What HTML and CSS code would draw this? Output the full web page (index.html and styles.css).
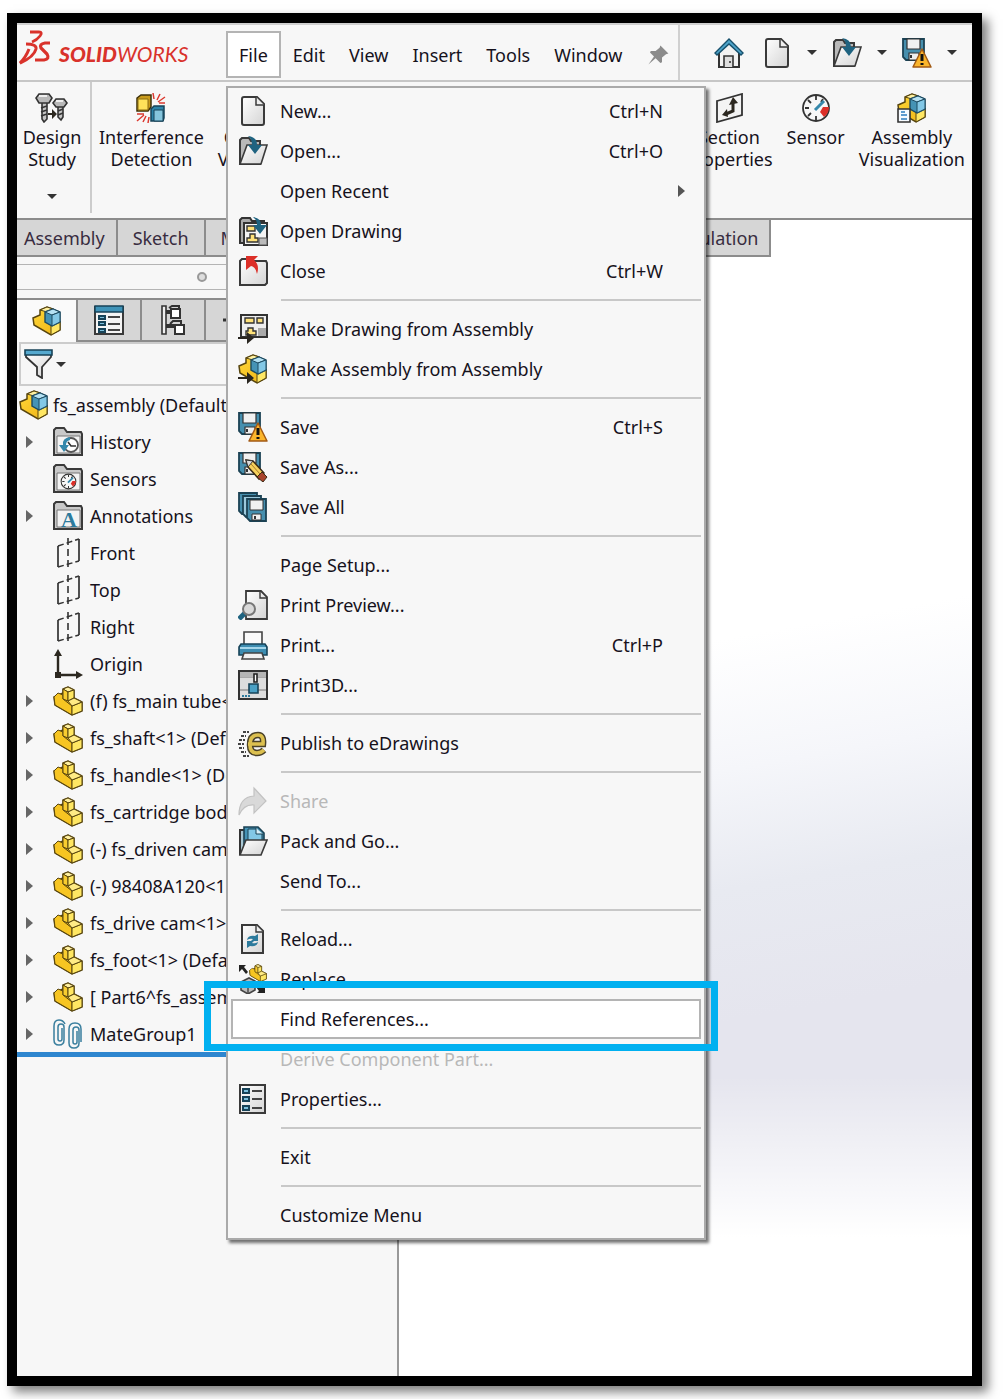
FILE: index.html
```html
<!DOCTYPE html>
<html lang="en">
<head>
    <meta charset="utf-8">
    <title>SOLIDWORKS - fs_assembly</title>
    <link rel="stylesheet" href="styles.css">
</head>
<body>
    <!-- icon sprite -->
    <svg class="sprite" aria-hidden="true">
        <defs>
            <linearGradient id="paper" x1="0" y1="0" x2="1" y2="1">
                <stop offset="0" stop-color="#fff"/>
                <stop offset="1" stop-color="#d4d4d4"/>
            </linearGradient>
            <linearGradient id="gold" x1="0" y1="0" x2="1" y2="1">
                <stop offset="0" stop-color="#ffd83a"/>
                <stop offset="1" stop-color="#f0b414"/>
            </linearGradient>
        </defs>
        <symbol id="i-new" viewBox="0 0 30 30">
            <path d="M6 1h13l7 7v19q0 2-2 2H6q-2 0-2-2V3q0-2 2-2z" fill="url(#paper)" stroke="#3a3a3a" stroke-width="2"/>
            <path d="M18 1v8h8" fill="#eee" stroke="#3a3a3a" stroke-width="1.5"/>
        </symbol>
        <symbol id="i-open" viewBox="0 0 30 30">
            <path d="M2 28V4l2-2h7l2 3h9v23z" fill="#b9b9b9" stroke="#3a3a3a" stroke-width="2"/>
            <path d="M2 28L9 9h20l-6 19z" fill="url(#paper)" stroke="#3a3a3a" stroke-width="1.6"/>
            <path d="M10 0q9 1 9 9h5l-7 9-7-9h4q0-6-4-9z" fill="#1f6380"/>
        </symbol>
        <symbol id="i-opendraw" viewBox="0 0 30 30">
            <path d="M2 27V4l2-2h8l2 3h12v22z" fill="#aaa" stroke="#333" stroke-width="2"/>
            <path d="M6 7h23v22H6z" fill="#f4f4f4" stroke="#333" stroke-width="2"/>
            <path d="M9 10h8v5H9zM12 18h5v4h3v4H9v-4h3z" fill="#ffe27a" stroke="#333" stroke-width="1.4"/>
            <path d="M21 22h8v7h-8z" fill="#bbb" stroke="#555"/>
            <path d="M15 1q8 1 8 8h6l-7 9-7-9h4q0-5-4-8z" fill="#1f6380"/>
        </symbol>
        <symbol id="i-close" viewBox="0 0 30 30">
            <path d="M2 29V5l2-2h7l2 2h15l1 2v20l-2 2z" fill="url(#paper)" stroke="#3a3a3a" stroke-width="2"/>
            <path d="M8 0h12l-4 4q6 5 3 14-1-7-6-8l-5 4z" fill="#dc2f28"/>
        </symbol>
        <symbol id="i-part" viewBox="0 0 30 30">
            <path d="M1 11l9-4V3l5-2 6 3v8l8 4v9l-10 4L2 19z" fill="url(#gold)" stroke="#57450f" stroke-width="1.5"/>
            <path d="M1 11l4-4 5 2v4l9 7v9L2 19z" fill="#f7c522" stroke="#57450f"/>
            <path d="M10 3l5 3 6-2-6-3z" fill="#fff0a0" stroke="#57450f"/>
            <path d="M10 3l5 3v9l-5-2z" fill="#f9cd30" stroke="#57450f"/>
            <path d="M15 6l6-2v8l-6 3zM19 20l10-4v9l-10 4z" fill="#ffe763" stroke="#57450f"/>
            <path d="M15 15l6-3 8 4-10 4z" fill="#ffeb85" stroke="#57450f"/>
        </symbol>
        <symbol id="i-asm" viewBox="0 0 30 30">
            <path d="M1 12l7-3V4l7-3 6 2v10l7 3v8l-9 5L2 19z" fill="url(#gold)" stroke="#57450f" stroke-width="1.5"/>
            <path d="M8 4l7 2 6-3-6-2z" fill="#fff0a0" stroke="#57450f"/>
            <path d="M19 18l9-3v9l-9 5z" fill="#ffe763" stroke="#57450f"/>
            <path d="M13 6l8-3 7 3v10l-8 4-7-4z" fill="#4593b5" stroke="#1d4a60" stroke-width="1.4"/>
            <path d="M13 6l7 3 8-3-7-3z" fill="#b5e2f4" stroke="#1d4a60"/>
            <path d="M20 9l8-3v10l-8 4z" fill="#83c8e6" stroke="#1d4a60"/>
        </symbol>
        <symbol id="i-makedraw" viewBox="0 0 30 30">
            <path d="M3 1h26v22H3z" fill="#eee" stroke="#333" stroke-width="2"/>
            <path d="M7 4h9v5H7zM19 4h6v5h-6zM10 14h5v3h3v4H8v-4h2z" fill="#ffe27a" stroke="#333" stroke-width="1.4"/>
            <path d="M20 14h8v8h-8z" fill="#aaa"/>
            <path d="M0 23h9v-5l7 6-7 6v-5H0z" fill="#2a2620"/>
        </symbol>
        <symbol id="i-makeasm" viewBox="0 0 30 30">
            <use href="#i-asm"/>
            <path d="M0 23h9v-5l7 6-7 6v-5H0z" fill="#2a2620"/>
        </symbol>
        <symbol id="i-floppy" viewBox="0 0 30 30">
            <path d="M1 1h21v21H4l-3-3z" fill="#468fae" stroke="#1b4254" stroke-width="1.8"/>
            <path d="M5 1h13v10H5z" fill="#f1f1f1" stroke="#333" stroke-width="1.2"/>
            <path d="M7 15h10v7H7z" fill="#eee" stroke="#333" stroke-width="1.2"/>
            <path d="M8 17h2v3H8z" fill="#333"/>
        </symbol>
        <symbol id="i-save" viewBox="0 0 30 30">
            <use href="#i-floppy"/>
            <path d="M20 11l9 18H11z" fill="#fbb52b" stroke="#a35a14" stroke-width="1.5" stroke-linejoin="round"/>
            <path d="M20 16v7M20 25v2" stroke="#111" stroke-width="3"/>
        </symbol>
        <symbol id="i-saveas" viewBox="0 0 30 30">
            <use href="#i-floppy"/>
            <path d="M8 8l7 1 11 12-5 6L10 15z" fill="#f6d15c" stroke="#3c2b14" stroke-width="1.5"/>
            <path d="M8 8l7 1-5 6z" fill="#ddd" stroke="#333"/>
            <path d="M24 20l5 5-4 5-6-5z" fill="#a8442c" stroke="#3c2b14"/>
            <path d="M13 12l9 10" stroke="#a87b28"/>
        </symbol>
        <symbol id="i-saveall" viewBox="0 0 30 30">
            <path d="M1 1h18v21H4l-3-3z" fill="#468fae" stroke="#1b4254" stroke-width="1.8"/>
            <path d="M5 4h18v21H8l-3-3z" fill="#9cc9dc" stroke="#1b4254" stroke-width="1.8"/>
            <path d="M9 7h19v22H12l-3-3z" fill="#468fae" stroke="#1b4254" stroke-width="1.8"/>
            <path d="M12 8h13v10H12zM14 22h9v6h-9z" fill="#f1f1f1" stroke="#333"/>
            <path d="M16 24h2v3h-2z" fill="#333"/>
        </symbol>
        <symbol id="i-preview" viewBox="0 0 30 30">
            <path d="M8 1h15l6 6v22H8z" fill="url(#paper)" stroke="#3a3a3a" stroke-width="1.8"/>
            <path d="M22 1v7h7" fill="none" stroke="#3a3a3a" stroke-width="1.4"/>
            <path d="M1 29l6-6" stroke="#1f6380" stroke-width="5"/>
            <circle cx="11" cy="19" r="6" fill="#d9d9d9" stroke="#777" stroke-width="2"/>
        </symbol>
        <symbol id="i-print" viewBox="0 0 30 30">
            <path d="M6 16V2h18v14z" fill="#fafafa" stroke="#444" stroke-width="1.6"/>
            <path d="M3 14h24l2 3v8H1v-8z" fill="#3d8db1" stroke="#174358" stroke-width="1.6"/>
            <path d="M2 18h26" stroke="#a5d6ea" stroke-width="2"/>
            <path d="M6 23h18l2 6H4z" fill="#f2f2f2" stroke="#444" stroke-width="1.6"/>
        </symbol>
        <symbol id="i-print3d" viewBox="0 0 30 30">
            <path d="M1 1h28v28H1z" fill="#ddd" stroke="#333" stroke-width="2"/>
            <path d="M2 7h26M2 20h26" stroke="#777"/>
            <path d="M2 2h26v5H2z" fill="#b5b5b5"/>
            <path d="M16 4h3v8h-3z" fill="#fff" stroke="#222" stroke-width="1.6"/>
            <path d="M11 14h9v9h-9z" fill="#4aa0c4" stroke="#174358" stroke-width="1.6"/>
            <path d="M4 26h2m1 0h2m1 0h2" stroke="#2c7a9c" stroke-width="2"/>
        </symbol>
        <symbol id="i-edraw" viewBox="0 0 30 30">
            <path d="M10 16h15q1-9-5-9-8 0-8 10 0 8 7 8 4 0 7-3" fill="none" stroke="#4a4128" stroke-width="6.5"/>
            <path d="M10 16h15q1-9-5-9-8 0-8 10 0 8 7 8 4 0 7-3" fill="none" stroke="#dcc04f" stroke-width="3.6"/>
            <path d="M5 4h6M3 8h5M1 12h6M0 16h6M1 20h5M3 24h5M5 28h6" stroke="#444" stroke-width="2" stroke-dasharray="3 1"/>
        </symbol>
        <symbol id="i-share" viewBox="0 0 30 30">
            <path d="M1 29q0-18 15-19V2l12 13-12 12v-8Q6 18 1 29z" fill="#d9d9d9" stroke="#c2c2c2" stroke-width="1.2"/>
        </symbol>
        <symbol id="i-pack" viewBox="0 0 30 30">
            <path d="M2 28V4h6v24z" fill="#a9c7d3" stroke="#333" stroke-width="2"/>
            <path d="M6 22V1h14l6 6v8H10z" fill="#4593b5" stroke="#1b4254" stroke-width="1.6"/>
            <path d="M10 18V3h8l6 5v8z" fill="#83c8e6" stroke="#1b4254"/>
            <path d="M18 2v6h7" fill="#d8f0fa" stroke="#1b4254"/>
            <path d="M2 29l6-15h21l-6 15z" fill="url(#paper)" stroke="#3a3a3a" stroke-width="1.6"/>
        </symbol>
        <symbol id="i-reload" viewBox="0 0 30 30">
            <path d="M4 1h15l6 6v22H4z" fill="url(#paper)" stroke="#3a3a3a" stroke-width="2"/>
            <path d="M18 1v7h7" fill="#eee" stroke="#3a3a3a" stroke-width="1.4"/>
            <path d="M9 16q1-5 8-4l3-2v7h-7l2-2q-3-1-6 1zM20 18q-1 5-8 4l-3 2v-7h7l-2 2q3 1 6-1z" fill="#2c7a9c"/>
        </symbol>
        <symbol id="i-replace" viewBox="0 0 30 30">
            <use href="#i-part" x="11" y="0" width="18" height="18"/>
            <path d="M1 1h7L6 3l4 5-2 2-4-5-3 3z" fill="#222"/>
            <path d="M3 18l8-4 6 3v9l-7 4-7-4z" fill="#bbb" stroke="#444" stroke-width="1.6"/>
            <path d="M3 18l7 3v9m0-9l7-4" fill="none" stroke="#444" stroke-width="1.4"/>
            <path d="M27 29h-8l2-2-3-4 3-2 3 3 3-3z" fill="#222"/>
        </symbol>
        <symbol id="i-props" viewBox="0 0 30 30">
            <path d="M2 1h25v28H2z" fill="url(#paper)" stroke="#3a3a3a" stroke-width="2"/>
            <path d="M5 5h6v4H5zM5 13h6v4H5zM5 22h6v4H5z" fill="#7cc0dd" stroke="#174358" stroke-width="2"/>
            <path d="M14 7h10M14 15h10M14 24h10" stroke="#444" stroke-width="2"/>
        </symbol>
        <symbol id="i-proptab" viewBox="0 0 30 30">
            <path d="M1 2h28v27H1z" fill="#f4f4f4" stroke="#3a3a3a" stroke-width="2"/>
            <path d="M1 1h28v6H1z" fill="#3f93b8" stroke="#174358" stroke-width="1.4"/>
            <path d="M5 11h6v3H5zM5 17h6v3H5zM5 24h6v3H5z" fill="#7cc0dd" stroke="#174358" stroke-width="2"/>
            <path d="M14 12h12M14 19h12M14 25h12" stroke="#444" stroke-width="2"/>
        </symbol>
        <symbol id="i-config" viewBox="0 0 30 30">
            <path d="M4 1h4v28H4z" fill="#eee" stroke="#333" stroke-width="1.6"/>
            <path d="M8 7h6M8 21h8" stroke="#333" stroke-width="4"/>
            <path d="M11 3l3-2h7v4M12 19l3-3h8v3" fill="none" stroke="#333" stroke-width="2"/>
            <path d="M13 4h9v9h-9zM17 20h9v9h-9z" fill="#fff" stroke="#333" stroke-width="2"/>
        </symbol>
        <symbol id="i-target" viewBox="0 0 30 30">
            <circle cx="15" cy="15" r="9" fill="none" stroke="#333" stroke-width="2"/>
            <path d="M1 15h28M15 1v28" stroke="#333" stroke-width="3"/>
        </symbol>
        <symbol id="i-filter" viewBox="0 0 30 30">
            <path d="M2 5h25v3l-9 10v11l-5-3v-8L2 8z" fill="url(#paper)" stroke="#333" stroke-width="1.8"/>
            <path d="M1 1h27v5H1z" fill="#55a9cf" stroke="#174358" stroke-width="1.6"/>
        </symbol>
        <symbol id="i-folder" viewBox="0 0 30 30">
            <path d="M1 28V3l2-2h8l3 4h14l1 2v21z" fill="#c9c9c9" stroke="#3a3a3a" stroke-width="2"/>
            <path d="M4 9h23v17H4z" fill="#f3f3f3" stroke="#777"/>
        </symbol>
        <symbol id="i-history" viewBox="0 0 30 30">
            <use href="#i-folder"/>
            <circle cx="18" cy="18" r="7" fill="#fff" stroke="#555" stroke-width="1.8"/>
            <path d="M15 15l3 4h5" fill="none" stroke="#333" stroke-width="1.6"/>
            <path d="M17 10q-8 1-7 8H6l5 7 5-7h-3q0-4 4-5z" fill="#3588ab"/>
        </symbol>
        <symbol id="i-gauge" viewBox="0 0 30 30">
            <circle cx="15" cy="15" r="13" fill="#f7f7f7" stroke="#333" stroke-width="1.8"/>
            <path d="M15 3v4M4 15h4M7 7l3 3M7 23l3-3M15 27v-4M22 6l-2 3" stroke="#333" stroke-width="1.8"/>
            <path d="M19 19l3-5h6q0 6-5 10z" fill="#dc2f28"/>
            <path d="M14 17l9-9" stroke="#3588ab" stroke-width="3"/>
        </symbol>
        <symbol id="i-sensors" viewBox="0 0 30 30">
            <use href="#i-folder"/>
            <use href="#i-gauge" x="7" y="9" width="17" height="17"/>
        </symbol>
        <symbol id="i-plane" viewBox="0 0 30 30">
            <path d="M5 8v21M26 1v22" stroke="#333" stroke-width="1.7"/>
            <path d="M5 8l21-7M5 29l21-6" stroke="#333" stroke-width="1.5" stroke-dasharray="6 3"/>
            <path d="M15 0v30" stroke="#333" stroke-width="1.6" stroke-dasharray="7 4"/>
        </symbol>
        <symbol id="i-origin" viewBox="0 0 30 30">
            <path d="M5 27V6M5 26h20" stroke="#2c2820" stroke-width="2.4"/>
            <path d="M5 0l4 7H1zM30 26l-7 4v-8zM2 23h6v6H2z" fill="#2c2820"/>
        </symbol>
        <symbol id="i-mates" viewBox="0 0 30 30">
            <path d="M9 9v11q0 2-2 2t-2-2V8q0-3 3-3t3 3v13q0 5-5 5t-5-5V7q0-6 5-6 4 0 6 4" fill="none" stroke="#3a7f9e" stroke-width="1.5"/>
            <path d="M24 12v11q0 2-2 2t-2-2V11q0-3 3-3t3 3v13q0 5-5 5t-5-5V10q0-6 6-6t6 6v13" fill="none" stroke="#3a7f9e" stroke-width="1.5"/>
        </symbol>
        <symbol id="i-home" viewBox="0 0 30 30">
            <path d="M5 13v16h20V13L15 5z" fill="#f2f2f2" stroke="#333" stroke-width="2"/>
            <path d="M10 29V18h9v11M16 23v2" fill="#ddd" stroke="#333" stroke-width="1.6"/>
            <path d="M1 15L15 1l14 14-2 2L15 6 3 17z" fill="#4ea3c8" stroke="#17506c" stroke-width="1.4"/>
        </symbol>
        <symbol id="i-study" viewBox="0 0 34 30">
            <path d="M7 8h5v18l-3 3-2-3zM23 12h5v12l-2 3-3-3z" fill="#c4c4c4" stroke="#333" stroke-width="1.6"/>
            <path d="M4 1h10l3 4-3 5H4L1 5zM21 6h8l3 4-3 4h-8l-3-4z" fill="#b8b8b8" stroke="#333" stroke-width="1.6"/>
            <path d="M4 3h8M21 8h7" stroke="#eee" stroke-width="2"/>
            <path d="M6 15l6-2M6 19l6-2M6 23l6-2M23 18l5-2M23 22l5-2" stroke="#333" stroke-width="1.4"/>
            <path d="M13 20h4v-4l5 5-5 5v-4h-4z" fill="#2c2820"/>
        </symbol>
        <symbol id="i-interf" viewBox="0 0 30 30">
            <path d="M1 5l4-3h10v12l-3 4H1z" fill="#c99b1c" stroke="#3c300a" stroke-width="1.5"/>
            <path d="M2 6h10v11H2z" fill="#ffe25a" stroke="#8a6c12"/>
            <path d="M15 16l3-3h10v12l-1 3H15z" fill="#2c83a8" stroke="#174358" stroke-width="1.5"/>
            <path d="M18 17h9v11h-9z" fill="#85c5dd" stroke="#174358"/>
            <path d="M18 6l-1-6M21 7l3-6M22 9l7-5M23 10h6M1 21h7M8 22l-7 6M10 23l-3 6M13 24l-1 6" stroke="#dc3a30" stroke-width="1.5"/>
        </symbol>
        <symbol id="i-section" viewBox="0 0 30 30">
            <path d="M3 8l25-7v21L3 29z" fill="#f4f4f4" stroke="#333" stroke-width="1.8"/>
            <path d="M12 21l7-3v-9" fill="none" stroke="#2c2820" stroke-width="3"/>
            <path d="M19 4l5 6-9 2zM8 22l5-6 1 8z" fill="#2c2820"/>
        </symbol>
        <symbol id="i-visual" viewBox="0 0 30 30">
            <use href="#i-asm"/>
            <path d="M1 16h12v13H1z" fill="#f7fbff" stroke="#333" stroke-width="1.6"/>
            <path d="M4 19h4M4 22h6M4 26h6" stroke="#2f7fc0" stroke-width="1.5"/>
        </symbol>
        <symbol id="i-pin" viewBox="0 0 30 30">
            <path d="M18 3l10 10-3 1-5 4v6l-2 1-6-6-9 8 7-10-5-5 1-2h6l5-4z" fill="#8b8b8b"/>
        </symbol>
    </svg>

    <div class="app">
        <header class="titlebar">
            <a class="brand" href="#">
                <svg class="brand-mark" viewBox="0 0 34 36" aria-hidden="true">
                    <path d="M12 2h9q4 0 1 4-3 4-8 6" fill="none" stroke="#d9322b" stroke-width="2.8"/>
                    <path d="M8 14q11 0 10 5-2 8-16 14 6-6 9-14" fill="none" stroke="#d9322b" stroke-width="3"/>
                    <path d="M32 13h-5q-6 1-4 5l6 6q3 5-3 6h-9" fill="none" stroke="#d9322b" stroke-width="3.2"/>
                </svg>
                <span class="brand-name"><b>SOLID</b>WORKS</span>
            </a>
            <nav class="menubar">
                <div class="menu-anchor">
                    <button class="menubar-item open">File</button>
                    <div class="menu">
                        <button class="item"><svg><use href="#i-new"/></svg><span>New...</span><kbd>Ctrl+N</kbd></button>
                        <button class="item"><svg><use href="#i-open"/></svg><span>Open...</span><kbd>Ctrl+O</kbd></button>
                        <button class="item submenu"><span>Open Recent</span><i class="arrow-right"></i></button>
                        <button class="item"><svg><use href="#i-opendraw"/></svg><span>Open Drawing</span></button>
                        <button class="item"><svg><use href="#i-close"/></svg><span>Close</span><kbd>Ctrl+W</kbd></button>
                        <hr>
                        <button class="item"><svg><use href="#i-makedraw"/></svg><span>Make Drawing from Assembly</span></button>
                        <button class="item"><svg><use href="#i-makeasm"/></svg><span>Make Assembly from Assembly</span></button>
                        <hr>
                        <button class="item"><svg><use href="#i-save"/></svg><span>Save</span><kbd>Ctrl+S</kbd></button>
                        <button class="item"><svg><use href="#i-saveas"/></svg><span>Save As...</span></button>
                        <button class="item"><svg><use href="#i-saveall"/></svg><span>Save All</span></button>
                        <hr>
                        <button class="item"><span>Page Setup...</span></button>
                        <button class="item"><svg><use href="#i-preview"/></svg><span>Print Preview...</span></button>
                        <button class="item"><svg><use href="#i-print"/></svg><span>Print...</span><kbd>Ctrl+P</kbd></button>
                        <button class="item"><svg><use href="#i-print3d"/></svg><span>Print3D...</span></button>
                        <hr>
                        <button class="item"><svg><use href="#i-edraw"/></svg><span>Publish to eDrawings</span></button>
                        <hr>
                        <button class="item" disabled><svg><use href="#i-share"/></svg><span>Share</span></button>
                        <button class="item"><svg><use href="#i-pack"/></svg><span>Pack and Go...</span></button>
                        <button class="item"><span>Send To...</span></button>
                        <hr>
                        <button class="item"><svg><use href="#i-reload"/></svg><span>Reload...</span></button>
                        <button class="item"><svg><use href="#i-replace"/></svg><span>Replace...</span></button>
                        <button class="item selected"><span>Find References...</span></button>
                        <button class="item" disabled><span>Derive Component Part...</span></button>
                        <button class="item"><svg><use href="#i-props"/></svg><span>Properties...</span></button>
                        <hr>
                        <button class="item"><span>Exit</span></button>
                        <hr>
                        <button class="item"><span>Customize Menu</span></button>
                    </div>
                </div>
                <button class="menubar-item">Edit</button>
                <button class="menubar-item">View</button>
                <button class="menubar-item">Insert</button>
                <button class="menubar-item">Tools</button>
                <button class="menubar-item">Window</button>
                <button class="pin" aria-label="Pin menu"><svg><use href="#i-pin"/></svg></button>
            </nav>
            <div class="quick">
                <button aria-label="Home"><svg><use href="#i-home"/></svg></button>
                <button class="drop" aria-label="New"><svg><use href="#i-new"/></svg><i class="arrow-down"></i></button>
                <button class="drop" aria-label="Open"><svg><use href="#i-open"/></svg><i class="arrow-down"></i></button>
                <button class="drop" aria-label="Save"><svg><use href="#i-save"/></svg><i class="arrow-down"></i></button>
            </div>
        </header>

        <div class="ribbon">
            <button class="tool study"><svg><use href="#i-study"/></svg>Design<br>Study<i class="arrow-down"></i></button>
            <button class="tool"><svg><use href="#i-interf"/></svg>Interference<br>Detection</button>
            <button class="tool"><svg></svg>Clearance<br>Verification</button>
            <button class="tool push"><svg><use href="#i-section"/></svg>Section<br>Properties</button>
            <button class="tool"><svg><use href="#i-gauge"/></svg>Sensor</button>
            <button class="tool"><svg><use href="#i-visual"/></svg>Assembly<br>Visualization</button>
        </div>

        <div class="workspace">
            <div class="tabs">
                <button>Assembly</button>
                <button class="roomy">Sketch</button>
                <button class="wide">Markup</button>
                <button>Simulation</button>
            </div>
            <aside class="panel">
                <div class="grip"><i></i></div>
                <div class="panel-tabs">
                    <button class="active" aria-label="Feature tree"><svg><use href="#i-asm"/></svg></button>
                    <button aria-label="Properties"><svg><use href="#i-proptab"/></svg></button>
                    <button aria-label="Configurations"><svg><use href="#i-config"/></svg></button>
                    <button aria-label="Dimensions"><svg><use href="#i-target"/></svg></button>
                </div>
                <button class="filter" aria-label="Filter"><svg><use href="#i-filter"/></svg><i class="arrow-down"></i></button>
                <div class="tree-root"><svg><use href="#i-asm"/></svg>fs_assembly (Default)</div>
                <ul class="tree">
                    <li class="has-children"><svg><use href="#i-history"/></svg>History</li>
                    <li><svg><use href="#i-sensors"/></svg>Sensors</li>
                    <li class="has-children"><svg viewBox="0 0 30 30"><use href="#i-folder"/><text x="16" y="26" class="annot-letter">A</text></svg>Annotations</li>
                    <li><svg><use href="#i-plane"/></svg>Front</li>
                    <li><svg><use href="#i-plane"/></svg>Top</li>
                    <li><svg><use href="#i-plane"/></svg>Right</li>
                    <li><svg><use href="#i-origin"/></svg>Origin</li>
                    <li class="has-children"><svg><use href="#i-part"/></svg>(f) fs_main tube&lt;1&gt;</li>
                    <li class="has-children"><svg><use href="#i-part"/></svg>fs_shaft&lt;1&gt; (Default)</li>
                    <li class="has-children"><svg><use href="#i-part"/></svg>fs_handle&lt;1&gt; (Default)</li>
                    <li class="has-children"><svg><use href="#i-part"/></svg>fs_cartridge body&lt;1&gt;</li>
                    <li class="has-children"><svg><use href="#i-part"/></svg>(-) fs_driven cam&lt;1&gt;</li>
                    <li class="has-children"><svg><use href="#i-part"/></svg>(-) 98408A120&lt;1&gt;</li>
                    <li class="has-children"><svg><use href="#i-part"/></svg>fs_drive cam&lt;1&gt;</li>
                    <li class="has-children"><svg><use href="#i-part"/></svg>fs_foot&lt;1&gt; (Default)</li>
                    <li class="has-children"><svg><use href="#i-part"/></svg>[ Part6^fs_assembly ]</li>
                    <li class="has-children"><svg><use href="#i-mates"/></svg>MateGroup1</li>
                </ul>
            </aside>
        </div>
    </div>
</body>
</html>
```
FILE: styles.css
```css
* { box-sizing: border-box; }
body {
    margin: 0;
    padding: 13px 23px 13px 7px;
    background: #fff;
    color: #16121c;
    font-family: "Noto Sans", sans-serif;
    font-size: 18px;
}
button { font: inherit; color: inherit; background: none; border: 0; padding: 0; white-space: nowrap; }
svg { width: 30px; height: 30px; flex: none; }
.sprite { position: absolute; width: 0; height: 0; }
.annot-letter { font: bold 22px "Liberation Serif", serif; fill: #2c7a9c; text-anchor: middle; }

.arrow-down { border: 5px solid transparent; border-top-color: #333; border-bottom: 0; }
.arrow-right { border: 6px solid transparent; border-left: 7px solid #555; border-right: 0; }

.app {
    display: flex;
    flex-direction: column;
    min-height: calc(100vh - 26px);
    border: 10px solid #000;
    box-shadow: 6px 6px 10px rgba(0, 0, 0, 0.5);
}

/* title bar */
.titlebar { display: flex; height: 59px; background: #f7f7f7; border-top: 2px solid #d0d0d0; border-bottom: 2px solid #c6c6c6; }
.brand { display: flex; width: 209px; padding-top: 5px; color: #d9322b; text-decoration: none; }
.brand-mark { width: 34px; height: 36px; margin: 0 7px 0 1px; }
.brand-name { font: italic 21px/48px Lato, sans-serif; }
.brand-name b { font-weight: 900; }
.menubar { display: flex; align-items: center; padding: 4px 8px 0 0; border-right: 2px solid #d0d0d0; }
.menu-anchor { position: relative; }
.menubar-item { height: 47px; padding: 0 12px; }
.menubar-item.open { padding: 0 11px; background: #fff; border: 2px solid #b4b4b4; }
.pin { margin-left: 12px; }
.pin svg { display: block; width: 24px; height: 24px; }
.quick { display: flex; align-items: center; gap: 18px; margin-left: auto; padding-right: 18px; }
.quick svg { display: block; }
.quick .drop { display: flex; align-items: center; gap: 15px; width: 52px; }

/* file menu */
.menu {
    position: absolute;
    z-index: 2;
    top: 55px;
    left: 0;
    width: 480px;
    padding: 3px;
    background: #f7f7f7;
    border: 2px solid #aaa;
    box-shadow: 3px 3px 3px rgba(0, 0, 0, 0.55);
}
.item { display: flex; align-items: center; width: 100%; height: 40px; padding: 0 38px 0 49px; text-align: left; }
.item svg { margin: 0 12px 0 -42px; }
.item kbd { margin-left: auto; font: inherit; }
.item.submenu { padding-right: 16px; }
.item .arrow-right { margin-left: auto; }
.item:disabled { color: #b8b8b8; }
.item.selected { position: relative; padding-left: 47px; background: #fff; border: 2px solid #b4b4b4; }
.item.selected::after { content: ""; position: absolute; inset: -20px -19px -14px -29px; border: 7px solid #00b0f0; }
.menu hr { height: 2px; margin: 8px 0 8px 50px; border: 0; background: #c8c8c8; }

/* ribbon */
.ribbon { display: flex; height: 138px; background: #f7f7f7; border-bottom: 2px solid #8c8c8c; }
.tool { display: flex; flex-direction: column; align-items: center; padding: 11px 7px 0; line-height: 22px; }
.tool svg { margin-bottom: 3px; }
.study { width: 75px; height: 131px; padding-right: 10px; border-right: 2px solid #ccc; }
.study svg { width: 34px; }
.study .arrow-down { margin-top: 24px; }
.push { margin-left: auto; }

/* command tabs */
.workspace {
    display: flex;
    flex-direction: column;
    flex: 1;
    background:
        linear-gradient(rgba(255, 255, 255, 0) 74%, #fff 88%),
        linear-gradient(170deg, #fff 41%, #f5f6fa 51%, #e8eaf1 60%, #e5e5ee 70%);
}
.tabs { display: flex; width: 79%; }
.tabs button { height: 37px; padding: 0 11px 0 15px; background: #d6d6d6; border: 2px solid #8c8c8c; border-width: 0 2px 2px 0; color: #382c40; }
.tabs button:first-child { padding-left: 7px; }
.tabs .roomy { padding-right: 15px; }
.tabs .wide { flex: 1; text-align: left; }

/* feature panel */
.panel { flex: 1; width: 382px; overflow: hidden; background: #f7f7f7; border-right: 2px solid #999; white-space: nowrap; }
.grip { display: flex; align-items: center; justify-content: center; height: 26px; margin: 7px 0 8px; padding-right: 10px; border: 1px solid #b4b4b4; border-width: 1px 0; }
.grip i { width: 10px; height: 10px; border: 2px solid #999; border-radius: 50%; background: #ddd; }
.panel-tabs { display: flex; border-top: 2px solid #8c8c8c; }
.panel-tabs button { width: 64px; height: 42px; flex: none; background: #d6d6d6; border-right: 2px solid #8c8c8c; border-bottom: 2px solid #8c8c8c; }
.panel-tabs .active { width: 61px; background: #fafafa; border-bottom: 0; }
.panel-tabs svg { display: block; margin: auto; }
.filter { display: flex; align-items: center; gap: 2px; width: 100%; height: 44px; margin-left: 2px; padding-left: 3px; border: 2px solid #ccc; }
.tree-root { display: flex; align-items: center; gap: 4px; height: 37px; padding-left: 2px; }
.tree { margin: 0; padding: 0; list-style: none; border-bottom: 5px solid #2e86cf; }
.tree li { display: flex; align-items: center; gap: 7px; height: 37px; padding-left: 36px; }
.tree .has-children { padding-left: 9px; }
.has-children::before { content: ""; margin-right: 13px; border: 6px solid transparent; border-left: 7px solid #666; border-right: 0; }
```
